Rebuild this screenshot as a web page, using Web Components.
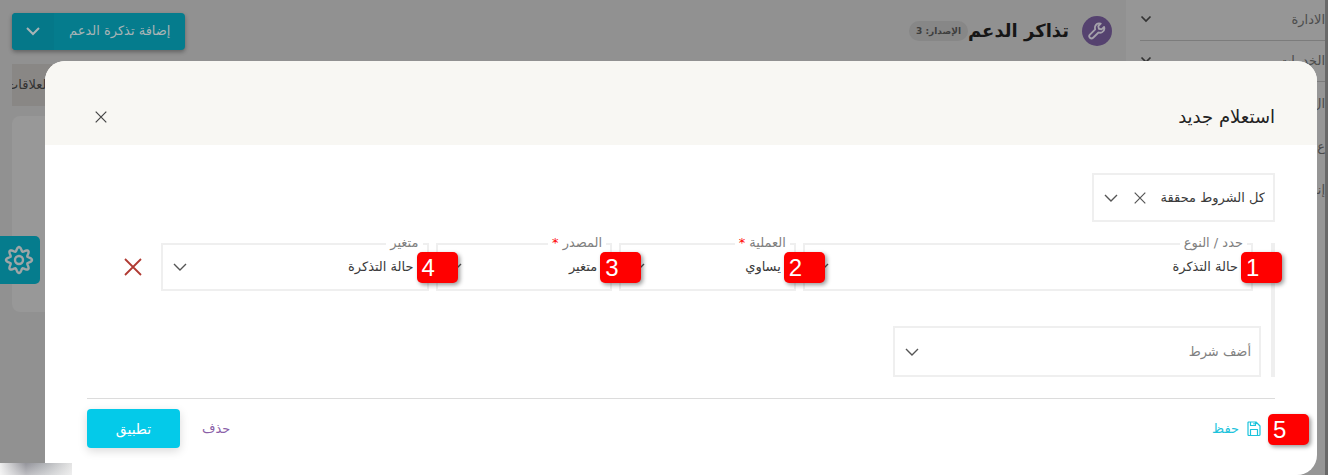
<!DOCTYPE html>
<html lang="ar" dir="rtl">
<head>
<meta charset="utf-8">
<title>تذاكر الدعم</title>
<style>
  * { box-sizing: border-box; }

  body {
    margin: 0;
    min-height: 100vh;
    overflow: hidden;
    font-family: "DejaVu Sans", sans-serif;
    font-size: 13px;
    line-height: 20px;
    color: #444;
    --teal: #057c8d;
    --cyan: #04cae9;
    --line: #efefef;
  }
</style>
</head>
<body>

<app-shell>
  <side-nav slot="nav">
    <nav-item expandable>الادارة</nav-item>
    <nav-item expandable>الخدمات</nav-item>
    <nav-item>ال</nav-item>
    <nav-item>ع</nav-item>
    <nav-item>إنـ</nav-item>
  </side-nav>

  <page-header slot="header" version="الإصدار: 3" action="إضافة تذكرة الدعم">تذاكر الدعم</page-header>
  <tab-strip slot="tabs">العلاقات</tab-strip>
  <settings-tab slot="overlay"></settings-tab>

  <query-dialog slot="overlay" heading="استعلام جديد">
    <select-field class="match" label-hidden label="الشروط" value="كل الشروط محققة" clearable></select-field>

    <condition-group>
      <condition-row>
        <select-field label="حدد / النوع" value="حالة التذكرة"><step-badge>1</step-badge></select-field>
        <select-field label="العملية" value="يساوي" required><step-badge>2</step-badge></select-field>
        <select-field label="المصدر" value="متغير" required><step-badge>3</step-badge></select-field>
        <select-field label="متغير" value="حالة التذكرة"><step-badge>4</step-badge></select-field>
      </condition-row>
      <select-field class="add" label-hidden placeholder label="أضف شرط" value="أضف شرط"></select-field>
    </condition-group>

    <dialog-actions slot="footer"></dialog-actions>
  </query-dialog>
</app-shell>

<script>
// eight rounded teeth around the hub
const gearPath = Array.from({ length: 97 }, (_, i) => {
  const angle = (i / 96) * Math.PI * 2;
  const radius = 11 + 2 * Math.cos(angle * 8);
  return `${(15 + radius * Math.cos(angle)).toFixed(2)} ${(15 + radius * Math.sin(angle)).toFixed(2)}`;
}).join('L');

const icons = {
  chevron: '<svg width="14" height="14" viewBox="0 0 14 14" fill="none" stroke="currentColor" stroke-width="1.4" aria-hidden="true"><path d="M1 4l6 6 6-6"/></svg>',
  chevronBold: '<svg width="14" height="14" viewBox="0 0 14 14" fill="none" stroke="currentColor" stroke-width="2" aria-hidden="true"><path d="M1 4l6 6 6-6"/></svg>',
  chevronSmall: '<svg width="12" height="12" viewBox="0 0 12 12" fill="none" stroke="currentColor" stroke-width="1.7" aria-hidden="true"><path d="M1.5 2.5L6 7l4.5-4.5"/></svg>',
  close: '<svg width="12" height="12" viewBox="0 0 12 12" fill="none" stroke="currentColor" stroke-width="1.2" aria-hidden="true"><path d="M.7.7l10.600 10.600M11.300.7L.7 11.300"/></svg>',
  remove: '<svg width="18" height="18" viewBox="0 0 18 18" fill="none" stroke="currentColor" stroke-width="1.8" aria-hidden="true"><path d="M1 1l16 16M17 1L1 17"/></svg>',
  save: '<svg width="14" height="16" viewBox="0 0 14 16" fill="none" stroke="currentColor" stroke-width="1.2" stroke-linejoin="round" aria-hidden="true"><path d="M1.5 1h7.500l4 4v8.500q0 1-1 1h-10q-1 0-1-1v-12zM3.500 1v3.500h5V1M3.500 14.500v-6h7v6M7 2v1.500"/></svg>',
  wrench: '<svg width="18" height="18" viewBox="0 0 24 24" fill="none" stroke="currentColor" stroke-width="2.4" stroke-linejoin="round" aria-hidden="true"><path d="M21.500 6.500l-3.500 3.300-3.500-.8-.8-3.500L17 2.200c-2.800-.7-6 .3-7.200 3-.7 1.500-.7 3.100-.2 4.500L2.600 16.800a2.900 2.900 0 0 0 4.200 4.200l7.200-7c1.500.5 3.200.4 4.700-.3 2.500-1.300 3.500-4.500 2.800-7.200z"/></svg>',
  gear: `<svg width="30" height="30" viewBox="0 0 30 30" fill="none" stroke="currentColor" stroke-width="2.4" stroke-linejoin="round" aria-hidden="true"><circle cx="15" cy="15" r="4"/><path d="M${gearPath}z"/></svg>`
};

const baseStyle = `
  * { box-sizing: border-box; }
  button {
    margin: 0;
    padding: 0;
    border: 0;
    background: none;
    font: inherit;
    color: inherit;
    cursor: pointer;
  }
  svg { display: block; flex: none; }
`;

class BaseElement extends HTMLElement {
  constructor() {
    super();
    this.attachShadow({ mode: 'open' });
  }

  connectedCallback() {
    this.shadowRoot.innerHTML = `<style>${baseStyle}${this.styles()}</style>${this.render()}`;
  }

  styles() { return ''; }
  render() { return '<slot></slot>'; }
}

// ---------- page behind the dialog ----------
class AppShell extends BaseElement {
  styles() {
    return `
      :host {
        position: relative;
        display: grid;
        grid-template-columns: 199px minmax(0, 1fr);
        min-height: 100vh;
        border-right: 3px solid #696969;
        background: #919191;
      }
      main { display: flex; flex-direction: column; padding: 0 12px; }
      .card {
        height: 196px;
        margin-top: 10px;
        border-radius: 8px;
        background: #989898;
      }
    `;
  }

  render() {
    return `
      <slot name="nav"></slot>
      <main>
        <slot name="header"></slot>
        <slot name="tabs"></slot>
        <div class="card"></div>
      </main>
      <slot name="overlay"></slot>
    `;
  }
}

class SideNav extends BaseElement {
  styles() {
    return `
      :host { display: block; background: #969696; }
      nav { display: flex; flex-direction: column; padding-left: 14px; }
    `;
  }

  render() {
    return '<nav><slot></slot></nav>';
  }
}

class NavItem extends BaseElement {
  styles() {
    return `
      :host { display: block; color: #4c4c4c; }
      a {
        display: flex;
        align-items: center;
        justify-content: space-between;
        height: 43px;
        color: inherit;
        text-decoration: none;
      }
      :host([expandable]) a { height: 41px; border-bottom: 1px solid #7c7c7c; }
      svg { color: #333; }
    `;
  }

  render() {
    const arrow = this.hasAttribute('expandable') ? icons.chevronSmall : '';
    return `<a href="#"><slot></slot>${arrow}</a>`;
  }
}

class PageHeader extends BaseElement {
  styles() {
    return `
      :host {
        display: flex;
        align-items: center;
        height: 62px;
        margin-bottom: 2px;
        padding-right: 2px;
      }
      .icon {
        display: grid;
        place-items: center;
        width: 30px;
        height: 30px;
        border-radius: 50%;
        background: #55426f;
        color: #a5a1ab;
      }
      h1 { margin: 0 13px 0 0; font-size: 18px; line-height: 32px; color: #161616; }
      .version {
        padding: 0 7px;
        border-radius: 11px;
        background: #878787;
        color: #3e3e3e;
        font-size: 9px;
        font-weight: bold;
      }
      .split {
        display: flex;
        height: 37px;
        margin-right: auto;
        border-radius: 4px;
        overflow: hidden;
        background: var(--teal);
        color: #a9b4b6;
        box-shadow: 0 2px 4px #00000055;
      }
      .main { padding: 0 15px; }
      .more {
        display: grid;
        place-items: center;
        width: 42px;
        background: #057889;
      }
    `;
  }

  render() {
    return `
      <span class="icon">${icons.wrench}</span>
      <h1><slot></slot></h1>
      <span class="version">${this.getAttribute('version')}</span>
      <div class="split">
        <button class="main" type="button">${this.getAttribute('action')}</button>
        <button class="more" type="button" aria-label="المزيد">${icons.chevronBold}</button>
      </div>
    `;
  }
}

class TabStrip extends BaseElement {
  styles() {
    return `
      :host {
        display: flex;
        justify-content: flex-end;
        height: 42px;
        overflow: hidden;
        background: #898785;
        color: #333;
      }
      button { margin-left: -6px; }
    `;
  }

  render() {
    return '<button type="button"><slot></slot></button>';
  }
}

class SettingsTab extends BaseElement {
  styles() {
    return `
      :host { position: absolute; top: 236px; left: 0; }
      button {
        display: grid;
        place-items: center;
        width: 40px;
        height: 48px;
        padding-right: 2px;
        border-radius: 0 5px 5px 0;
        background: var(--teal);
        color: #9fa6a7;
      }
    `;
  }

  render() {
    return `<button type="button" aria-label="الإعدادات">${icons.gear}</button>`;
  }
}

// ---------- dialog ----------
class QueryDialog extends BaseElement {
  styles() {
    return `
      :host {
        position: absolute;
        inset: 0;
        padding: 61px 8px 0 45px;
      }
      section {
        position: relative;
        border-radius: 20px 20px 20px 0;
        background: #fff;
      }
      header {
        display: flex;
        align-items: center;
        justify-content: space-between;
        height: 84px;
        padding: 28px 42px 0 50px;
        border-radius: 20px 20px 0 0;
        background: #f8f7f3;
        color: #222;
      }
      header button { color: #444; }
      h2 { margin: 0; font-size: 18px; font-weight: normal; line-height: 28px; }
      .body {
        display: flex;
        flex-direction: column;
        align-items: stretch;
        gap: 21px;
        padding: 28px 42px 21px;
      }
      ::slotted(.match) { width: 183px; height: 49px; }
      .smudge {
        position: absolute;
        bottom: 0;
        left: -45px;
        width: 72px;
        height: 12px;
        background:
          linear-gradient(#ffffff00, #ffffff66),
          linear-gradient(90deg, #eee, #93939a 36%, #b0b2b6 62%, #e4e4e4);
      }
    `;
  }

  render() {
    const heading = this.getAttribute('heading');
    return `
      <section role="dialog" aria-label="${heading}">
        <header>
          <h2>${heading}</h2>
          <button type="button" aria-label="إغلاق">${icons.close}</button>
        </header>
        <div class="body"><slot></slot></div>
        <slot name="footer"></slot>
        <div class="smudge"></div>
      </section>
    `;
  }
}

class SelectField extends BaseElement {
  styles() {
    return `
      :host { position: relative; display: block; height: 48px; }
      select {
        appearance: none;
        width: 100%;
        height: 100%;
        margin: 0;
        padding: 0 13px 0 40px;
        border: 2px solid var(--line);
        border-radius: 0;
        background: #fff;
        font: inherit;
        color: #3a3a3a;
      }
      label {
        position: absolute;
        top: -10px;
        right: 6px;
        padding: 0 4px;
        background: #fff;
        color: #808080;
      }
      :host([label-hidden]) label { display: none; }
      :host([label-hidden]) select { padding-right: 8px; }
      :host([placeholder]) select { color: #808080; }
      .star { color: #f00; }
      .icons {
        position: absolute;
        top: 0;
        bottom: 0;
        left: 12px;
        display: flex;
        align-items: center;
        gap: 16px;
        color: #555;
        pointer-events: none;
      }
    `;
  }

  render() {
    const label = this.getAttribute('label');
    const value = this.getAttribute('value');
    const star = this.hasAttribute('required') ? ' <span class="star">*</span>' : '';
    const clear = this.hasAttribute('clearable') ? icons.close : '';
    const aria = this.hasAttribute('label-hidden') ? `aria-label="${label}"` : '';
    return `
      <select id="field" ${aria}><option>${value}</option></select>
      <label for="field">${label}${star}</label>
      <span class="icons">${clear}${icons.chevron}</span>
      <slot></slot>
    `;
  }
}

class StepBadge extends BaseElement {
  styles() {
    return `
      :host {
        position: absolute;
        z-index: 1;
        top: 9px;
        right: -29px;
        width: 41px;
        height: 31px;
        padding-left: 5px;
        border-radius: 5px;
        background: #f00;
        box-shadow: 2px 2px 4px #00000066;
        color: #fff;
        direction: ltr;
        text-align: left;
        font: 24px/31px "Liberation Sans", Arial, sans-serif;
      }
    `;
  }
}

class ConditionGroup extends BaseElement {
  styles() {
    return `
      :host {
        display: flex;
        flex-direction: column;
        gap: 35px;
        padding-right: 10px;
        border-right: 4px solid var(--line);
      }
      ::slotted(.add) { width: 368px; height: 51px; }
    `;
  }
}

class ConditionRow extends BaseElement {
  styles() {
    return `
      :host {
        display: grid;
        grid-template-columns: 451fr 177fr 177fr 268fr 67px;
        gap: 7px;
        padding-right: 8px;
      }
      button { display: grid; place-items: center; width: 42px; color: #b03a32; }
    `;
  }

  render() {
    return `<slot></slot><button type="button" aria-label="إزالة الشرط">${icons.remove}</button>`;
  }
}

class DialogActions extends BaseElement {
  styles() {
    return `
      :host {
        display: flex;
        align-items: center;
        gap: 22px;
        margin: 0 42px;
        padding: 10px 0 27px;
        border-top: 1px solid #dcdcdc;
      }
      .save {
        position: relative;
        display: flex;
        align-items: center;
        gap: 8px;
        margin-left: auto;
        padding-right: 14px;
        color: #1cc3dc;
      }
      .save step-badge { top: -5px; right: -34px; }
      .delete { color: #8a5fa8; }
      .apply {
        width: 93px;
        height: 39px;
        border-radius: 4px;
        background: var(--cyan);
        box-shadow: 0 3px 10px #00000026;
        color: #fff;
        font-size: 14px;
      }
    `;
  }

  render() {
    return `
      <button class="save" type="button">${icons.save}<span>حفظ</span><step-badge>5</step-badge></button>
      <button class="delete" type="button">حذف</button>
      <button class="apply" type="button">تطبيق</button>
    `;
  }
}

customElements.define('step-badge', StepBadge);
customElements.define('select-field', SelectField);
customElements.define('condition-row', ConditionRow);
customElements.define('condition-group', ConditionGroup);
customElements.define('dialog-actions', DialogActions);
customElements.define('query-dialog', QueryDialog);
customElements.define('settings-tab', SettingsTab);
customElements.define('tab-strip', TabStrip);
customElements.define('page-header', PageHeader);
customElements.define('nav-item', NavItem);
customElements.define('side-nav', SideNav);
customElements.define('app-shell', AppShell);
</script>
</body>
</html>
